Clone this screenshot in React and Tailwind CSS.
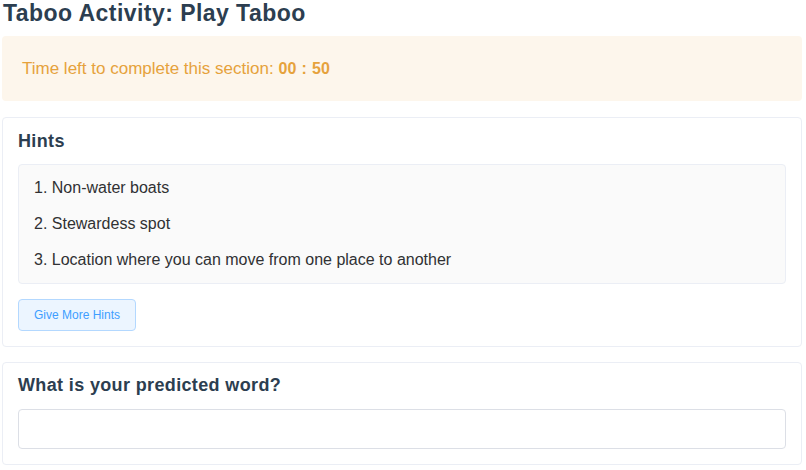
export default function App() {
  const hints = [
    "Non-water boats",
    "Stewardess spot",
    "Location where you can move from one place to another",
  ];

  return (
    <div className="w-[806px] h-[470px] bg-white px-[2px] font-['Liberation_Sans',Arial,sans-serif] text-[#2c3e50] overflow-hidden">
      <h1 className="text-[23px] leading-[22px] font-bold tracking-[0.45px] pt-[2px] pl-[1px]">Taboo Activity: Play Taboo</h1>

      {/* Timer alert */}
      <div className="mt-[12px] h-[65px] w-[800px] rounded bg-[#fdf6ec] flex items-center pl-[20px] text-[17px] text-[#e6a23c]">
        <span>
          Time left to complete this section: <b className="text-[16px] tracking-[0.3px]">00 : 50</b>
        </span>
      </div>

      {/* Hints */}
      <div className="mt-[16px] w-[800px] rounded border border-[#ebeef5] bg-white px-[15px] pt-[13px] pb-[15px]">
        <h3 className="text-[18px] leading-[21px] font-bold tracking-[0.36px]">Hints</h3>
        <div className="mt-[12px] rounded border border-[#ebeef5] bg-[#fafafa] px-[15px] pt-[5px] pb-[5px]">
          {hints.map((h, i) => (
            <div key={i} className="h-[36px] flex items-center text-[16px] text-[#303133]">
              {i + 1}. {h}
            </div>
          ))}
        </div>
        <button className="mt-[15px] h-[32px] w-[118px] rounded border border-[#b3d8ff] bg-[#ecf5ff] text-[12px] text-[#409eff]">
          Give More Hints
        </button>
      </div>

      {/* Prediction */}
      <div className="mt-[15px] w-[800px] rounded border border-[#ebeef5] bg-white px-[15px] pt-[12px] pb-[15px]">
        <h3 className="text-[18px] leading-[21px] font-bold tracking-[0.36px]">What is your predicted word?</h3>
        <input className="mt-[13px] block w-full h-[40px] rounded border border-[#dcdfe6] bg-white px-[15px] text-[14px] outline-none" />
      </div>
    </div>
  );
}
